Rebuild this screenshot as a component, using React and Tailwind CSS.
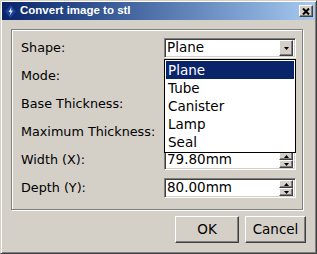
import React from 'react';

const raised =
  'bg-[#d4d0c8] border border-t-white border-l-white border-r-[#404040] border-b-[#404040] shadow-[inset_-1px_-1px_0_#808080]';
const sunken =
  'bg-white border border-t-[#808080] border-l-[#808080] border-r-white border-b-white shadow-[inset_1px_1px_0_#404040,inset_-1px_-1px_0_#d4d0c8]';

const Arrow = ({ up }) => (
  <svg width="5" height="3" viewBox="0 0 5 3">
    <polygon points={up ? '2.5,0 5,3 0,3' : '0,0 5,0 2.5,3'} fill="#000" />
  </svg>
);

const Combo = ({ value, children }) => (
  <div className="relative">
    <div className={`${sunken} h-[20px] flex items-center pl-[2px] pr-[2px]`}>
      <span className="flex-1 text-[13.5px] text-black leading-none">{value}</span>
      <div className={`${raised} w-[14px] h-[16px] flex items-center justify-center`}>
        <Arrow />
      </div>
    </div>
    {children}
  </div>
);

const Spin = ({ value }) => (
  <div className={`${sunken} h-[20px] flex items-center pl-[2px] pr-[2px]`}>
    <span className="flex-1 text-[13.5px] text-black leading-none">{value}</span>
    <div className="flex flex-col">
      <div className={`${raised} w-[14px] h-[8px] flex items-center justify-center`}>
        <Arrow up />
      </div>
      <div className={`${raised} w-[14px] h-[8px] flex items-center justify-center`}>
        <Arrow />
      </div>
    </div>
  </div>
);

const options = ['Plane', 'Tube', 'Canister', 'Lamp', 'Seal'];

export default function App() {
  return (
    <div
      className="w-[317px] h-[254px] bg-[#d4d0c8] border border-t-[#d4d0c8] border-l-[#d4d0c8] border-r-[#404040] border-b-[#404040] shadow-[inset_1px_1px_0_#fff,inset_-1px_-1px_0_#808080] p-[1px] flex flex-col"
      style={{ fontFamily: '"DejaVu Sans", sans-serif' }}
    >
      {/* title bar */}
      <div className="h-[18px] flex items-center bg-gradient-to-r from-[#0a246a] to-[#a6caf0] pl-[3px] pr-[2px]">
        <svg width="11" height="13" viewBox="0 0 11 13" className="mr-[4px]">
          <polygon points="5.5,0 11,6.5 5.5,13 0,6.5" fill="#1c3f9c" />
          <polygon points="6.5,2 3.5,7 5.5,7 4.5,11 8,5.5 6,5.5" fill="#dfe9ff" />
        </svg>
        <span
          className="flex-1 text-white font-bold text-[11.5px]"
          style={{ fontFamily: '"Liberation Sans", Arial, sans-serif' }}
        >
          Convert image to stl
        </span>
        <div className={`${raised} w-[14px] h-[12px] flex items-center justify-center`}>
          <svg width="8" height="7" viewBox="0 0 8 7">
            <path d="M1 0.5 L7 6.5 M7 0.5 L1 6.5" stroke="#000" strokeWidth="2" />
          </svg>
        </div>
      </div>

      {/* group box */}
      <div className="ml-[9px] mt-[9px] w-[292px] border border-[#808080] shadow-[inset_1px_1px_0_#fff,1px_1px_0_#fff] pl-[9px] pt-[8px] pb-[11px]">
        <div className="grid grid-cols-[143px_132px] gap-y-[8px] text-[12.75px] text-black">
          <div className="h-[20px] flex items-center">Shape:</div>
          <Combo value="Plane">
            <div className="absolute left-0 top-[21px] w-[132px] h-[94px] bg-white border border-black z-10 pt-[1px] px-[1px] text-[13.5px]">
              {options.map((o, i) => (
                <div
                  key={o}
                  className={`h-[18px] flex items-center pl-[2px] ${i === 0 ? 'bg-[#0a246a] text-white' : 'text-black'}`}
                >
                  {o}
                </div>
              ))}
            </div>
          </Combo>
          <div className="h-[20px] flex items-center">Mode:</div>
          <Combo value="" />
          <div className="h-[20px] flex items-center">Base Thickness:</div>
          <Spin value="" />
          <div className="h-[20px] flex items-center">Maximum Thickness:</div>
          <Spin value="" />
          <div className="h-[20px] flex items-center">Width (X):</div>
          <Spin value="79.80mm" />
          <div className="h-[20px] flex items-center">Depth (Y):</div>
          <Spin value="80.00mm" />
        </div>
      </div>

      {/* buttons */}
      <div className="flex justify-end gap-[6px] mt-[6px] pr-[9px]">
        <button className={`${raised} w-[64px] h-[27px] text-[13.5px] text-black`}>OK</button>
        <button className={`${raised} w-[61px] h-[27px] text-[13.5px] text-black`}>Cancel</button>
      </div>
    </div>
  );
}
